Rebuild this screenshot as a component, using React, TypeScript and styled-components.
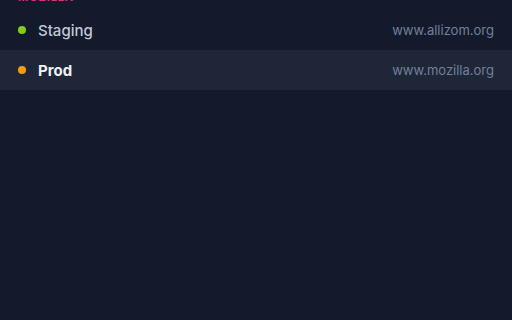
import React from "react";
import styled, { createGlobalStyle } from "styled-components";

const Global = createGlobalStyle`
  html, body { margin: 0; padding: 0; background: #131a2c; height: 100%; }
  #root { min-height: 100%; }
  body { font-family: Inter, "Noto Sans", sans-serif; overflow: hidden; }
`;

const Page = styled.div`
  width: 512px;
  height: 320px;
  background: #131a2c;
  overflow: hidden;
`;

const Section = styled.section`
  display: flex;
  flex-direction: column;
  margin-top: -9px;
`;

const Heading = styled.h3`
  margin: 0;
  padding: 0 18px;
  height: 19px;
  font-size: 11px;
  line-height: 12px;
  font-weight: 700;
  letter-spacing: 0.08em;
  text-transform: uppercase;
  color: #e0307a;
`;

const Row = styled.div<{ $active?: boolean }>`
  display: flex;
  align-items: center;
  height: 40px;
  padding: 0 18px;
  background: ${(p) => (p.$active ? "#1e2638" : "transparent")};
`;

const Dot = styled.span<{ $color: string }>`
  width: 8px;
  height: 8px;
  border-radius: 50%;
  background: ${(p) => p.$color};
  flex: none;
`;

const Name = styled.span<{ $active?: boolean }>`
  margin-left: 12px;
  font-size: 15px;
  font-weight: ${(p) => (p.$active ? 700 : 500)};
  color: ${(p) => (p.$active ? "#eef1f6" : "#c0c8d6")};
  flex: 1;
`;

const Url = styled.span`
  font-size: 13px;
  color: #74809a;
`;

const envs = [
  { name: "Staging", url: "www.allizom.org", color: "#84cc16", active: false },
  { name: "Prod", url: "www.mozilla.org", color: "#f59e0b", active: true },
];

export default function App() {
  return (
    <Page>
      <Global />
      <Section>
        <Heading>Mozilla</Heading>
        {envs.map((e) => (
          <Row key={e.name} $active={e.active}>
            <Dot $color={e.color} />
            <Name $active={e.active}>{e.name}</Name>
            <Url>{e.url}</Url>
          </Row>
        ))}
      </Section>
    </Page>
  );
}
